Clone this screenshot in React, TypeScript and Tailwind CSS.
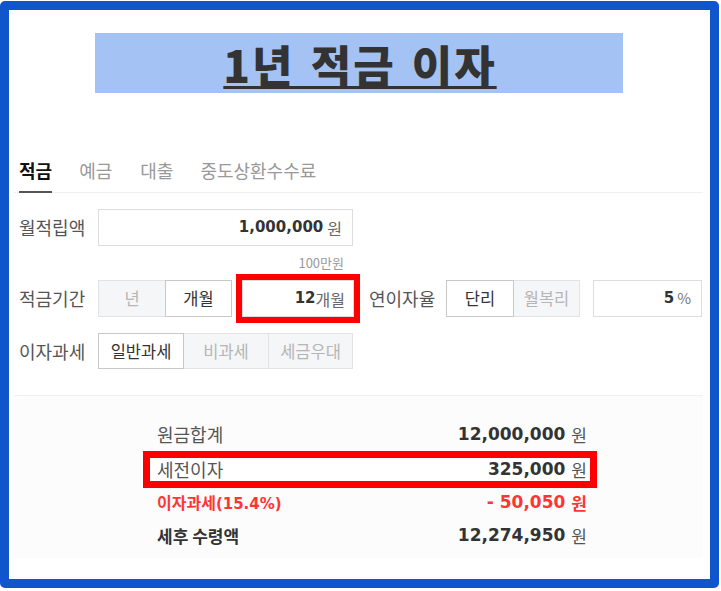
import React from "react";

const KR = "font-['Noto_Sans_CJK_KR','Noto_Sans',sans-serif]";
const NUM = "font-['DejaVu_Sans','Noto_Sans_CJK_KR',sans-serif]";

function Seg({ label, active, w }: { label: string; active?: boolean; w: string }) {
  return (
    <div
      className={`${w} h-full flex items-center justify-center text-[16.5px] ${
        active ? "bg-white text-[#333] border border-[#c8c8c8] z-10" : "bg-[#f5f6f8] text-[#b5b5b5] border border-[#e3e3e3]"
      } -ml-px first:ml-0`}
    >
      {label}
    </div>
  );
}

export default function App() {
  return (
    <div className={`w-[721px] h-[591px] bg-white pt-px ${KR}`}>
      <div className="w-[719px] h-[587px] border-[9px] border-[#1155cc] rounded-[5px] bg-white flex flex-col">
        {/* Title */}
        <div className="mt-[23px] ml-[86px] w-[528px] h-[60px] bg-[#a4c2f4] flex items-center justify-center">
          <span className="text-[44px] font-black text-[#333] leading-[50px] tracking-[2px] [word-spacing:4px] underline decoration-[3px] underline-offset-[3px] mt-[2px] ml-[2px]">
            1년 적금 이자
          </span>
        </div>

        <div className="ml-[5px] w-[689px] flex flex-col">
          {/* Tabs */}
          <div className="mt-[65px] flex gap-[27px] pl-[5px] border-b border-[#f0f0f0] text-[18px]">
            <div className="leading-[24px] pb-[9px] border-b-2 border-[#555] font-bold text-[#111] -mb-px">적금</div>
            <div className="leading-[24px] pb-[9px] text-[#999]">예금</div>
            <div className="leading-[24px] pb-[9px] text-[#999] ml-[1px]">대출</div>
            <div className="leading-[24px] pb-[9px] text-[#999]">중도상환수수료</div>
          </div>

          {/* Form */}
          <div className="pl-[5px] flex flex-col">
            <div className="mt-[16px] flex items-center h-[37px]">
              <div className="w-[79px] text-[18px] text-[#555]">월적립액</div>
              <div className="w-[255px] h-full border border-[#ddd] flex items-center justify-end pr-[10px]">
                <span className={`${NUM} font-bold text-[15px] text-[#333]`}>1,000,000</span>
                <span className="text-[16px] text-[#666] ml-[4px]">원</span>
              </div>
            </div>
            <div className="ml-[79px] w-[255px] mt-[8px] text-right pr-[9px] text-[13px] leading-[17px] text-[#999]">100만원</div>

            <div className="mt-[9px] flex items-center h-[37px]">
              <div className="w-[79px] text-[18px] text-[#555]">적금기간</div>
              <div className="flex h-full">
                <Seg label="년" w="w-[68px]" />
                <Seg label="개월" w="w-[67px]" active />
              </div>
              <div className="ml-[10px] w-[112px] h-full border border-[#ddd] outline-[6px] outline-[#ff0000] outline flex items-center justify-end pr-[8px]">
                <span className={`${NUM} font-bold text-[15px] text-[#333]`}>12</span>
                <span className="text-[16px] text-[#666]">개월</span>
              </div>
              <div className="ml-[15px] w-[77px] text-[18px] text-[#555]">연이자율</div>
              <div className="flex h-full">
                <Seg label="단리" w="w-[68px]" active />
                <Seg label="월복리" w="w-[67px]" />
              </div>
              <div className="ml-[13px] w-[109px] h-full border border-[#ddd] flex items-center justify-end pr-[10px]">
                <span className={`${NUM} font-bold text-[15px] text-[#333]`}>5</span>
                <span className="text-[15px] text-[#777] ml-[3px]">%</span>
              </div>
            </div>

            <div className="mt-[16px] flex items-center h-[36px]">
              <div className="w-[79px] text-[18px] text-[#555]">이자과세</div>
              <div className="flex h-full">
                <Seg label="일반과세" w="w-[86px]" active />
                <Seg label="비과세" w="w-[86px]" />
                <Seg label="세금우대" w="w-[85px]" />
              </div>
            </div>
          </div>

          {/* Results */}
          <div className="mt-[26px] h-[163px] border-t border-[#f0f0f0] bg-[#fcfcfc] pt-[21px]">
            <div className="ml-[136px] w-[440px] flex flex-col">
              <div className="h-[35px] pl-[7px] pr-[3px] flex items-center justify-between">
                <span className="text-[18px] text-[#555]">원금합계</span>
                <span className="flex items-center">
                  <span className={`${NUM} font-bold text-[17px] text-[#333]`}>12,000,000</span>
                  <span className="text-[17px] text-[#555] ml-[6px]">원</span>
                </span>
              </div>
              <div className="h-[35px] py-[6px]">
                <div className="h-[23px] bg-white outline outline-[7px] outline-[#ff0000] pl-[7px] pr-[3px] flex items-center justify-between">
                  <span className="text-[18px] text-[#555]">세전이자</span>
                  <span className="flex items-center">
                    <span className={`${NUM} font-bold text-[17px] text-[#333]`}>325,000</span>
                    <span className="text-[17px] text-[#555] ml-[6px]">원</span>
                  </span>
                </div>
              </div>
              <div className="h-[32px] pl-[7px] pr-[3px] flex items-center justify-between">
                <span className="text-[16px] font-bold text-[#ff3535]">
                  이자과세<span className={`${NUM} text-[15px]`}>(15.4%)</span>
                </span>
                <span className="flex items-center">
                  <span className={`${NUM} font-bold text-[17px] text-[#ff3535]`}>- 50,050</span>
                  <span className="text-[17px] font-bold text-[#ff3535] ml-[6px]">원</span>
                </span>
              </div>
              <div className="h-[34px] pl-[7px] pr-[3px] flex items-center justify-between">
                <span className="text-[17px] font-bold text-[#333]">세후 수령액</span>
                <span className="flex items-center">
                  <span className={`${NUM} font-bold text-[17px] text-[#333]`}>12,274,950</span>
                  <span className="text-[17px] text-[#555] ml-[6px]">원</span>
                </span>
              </div>
            </div>
          </div>
        </div>
      </div>
    </div>
  );
}
